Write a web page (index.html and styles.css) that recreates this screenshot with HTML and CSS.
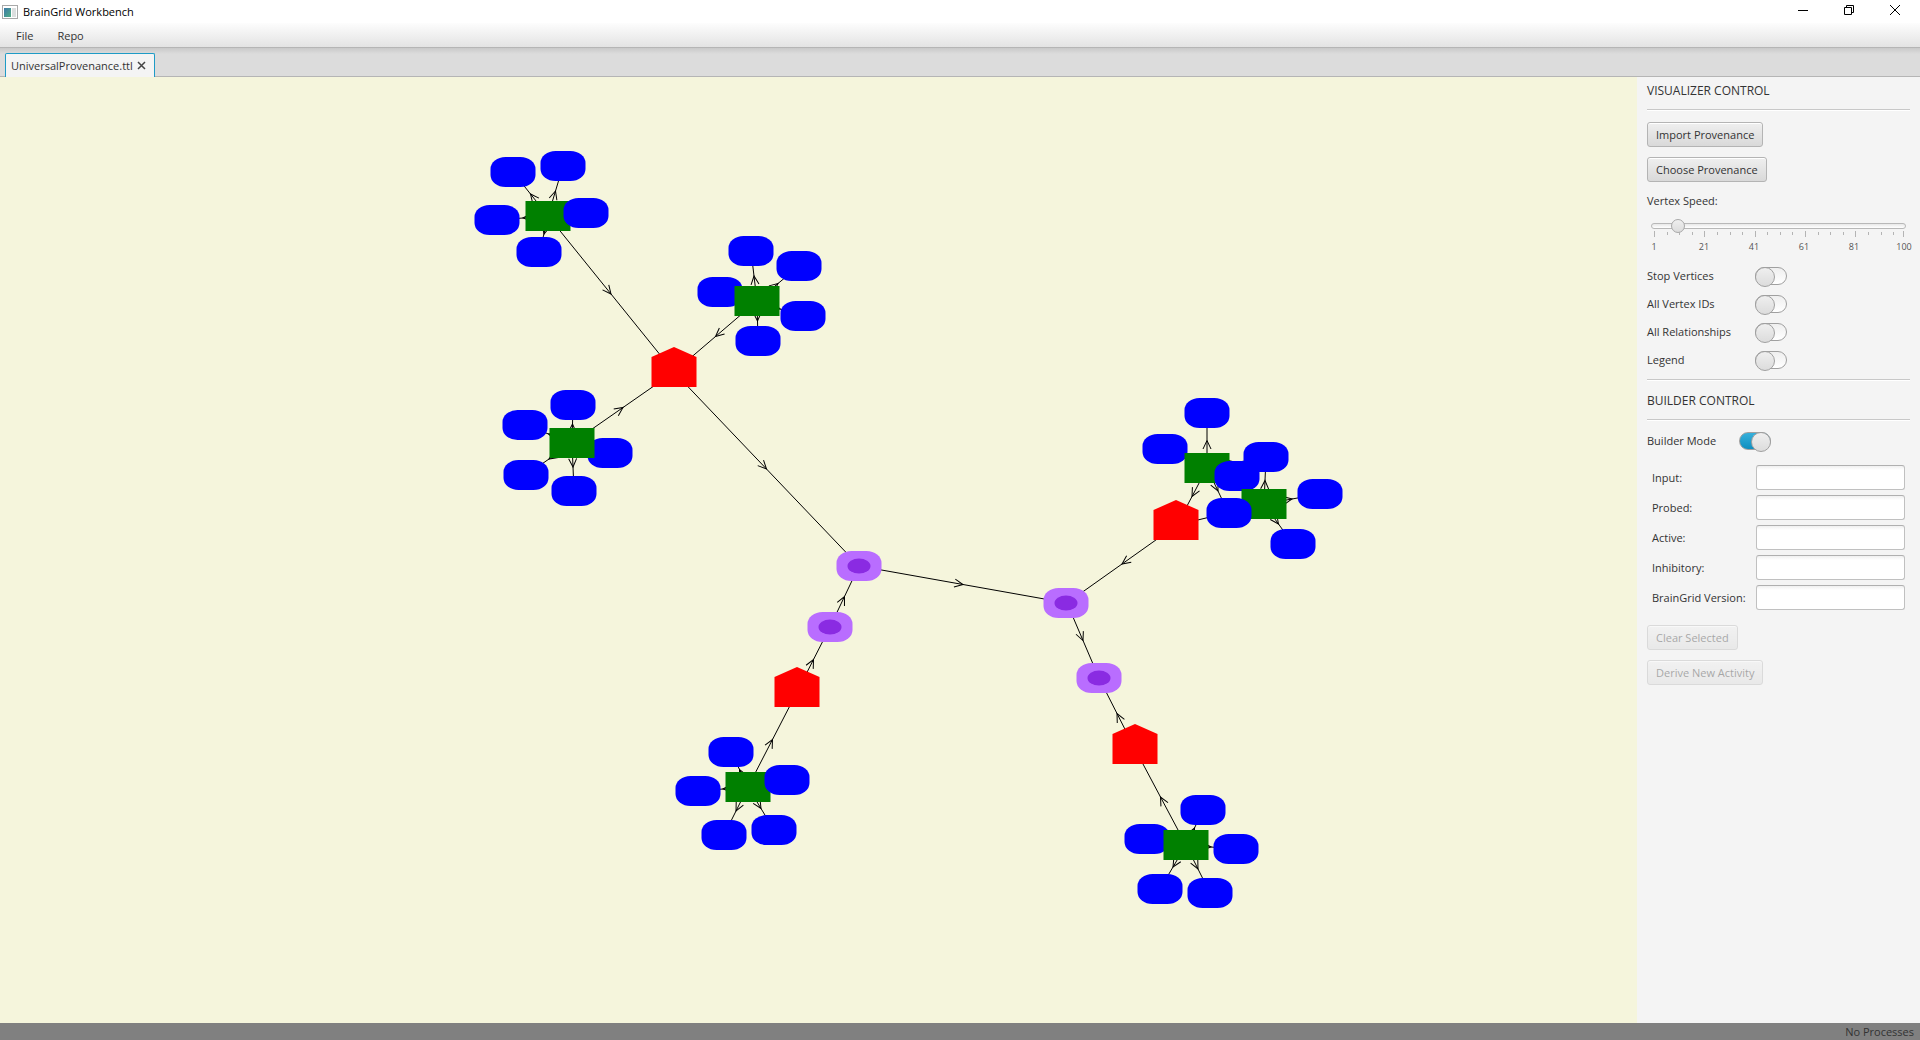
FILE: index.html
```html
<!DOCTYPE html>
<html lang="en">
<head>
<meta charset="utf-8">
<title>BrainGrid Workbench</title>
<link rel="stylesheet" href="styles.css">
</head>
<body>
<div class="window">
  <header class="titlebar">
    <svg class="app-icon" width="16" height="14" viewBox="0 0 16 14" aria-hidden="true">
      <defs><linearGradient id="pane" x1="0" y1="0" x2="1" y2="1"><stop offset="0" stop-color="#3d78a8"/><stop offset="1" stop-color="#4fae84"/></linearGradient></defs>
      <rect x="0.5" y="0.5" width="15" height="13" fill="#fff" stroke="#a9a9a9"/>
      <rect x="2" y="3" width="7" height="9" fill="url(#pane)"/>
      <rect x="10" y="3" width="4" height="9" fill="#dcdfdf"/>
    </svg>
    <h1 class="app-title">BrainGrid Workbench</h1>
    <div class="window-buttons">
      <button type="button" aria-label="Minimize"><svg width="12" height="12" viewBox="0 0 12 12"><path d="M1 6.5h10" stroke="#000" fill="none"/></svg></button>
      <button type="button" aria-label="Restore"><svg width="12" height="12" viewBox="0 0 12 12"><path d="M1.5 3.5h7v7h-7zM3.5 3.5v-2h7v7h-2" stroke="#000" fill="none"/></svg></button>
      <button type="button" aria-label="Close"><svg width="12" height="12" viewBox="0 0 12 12"><path d="M1 1l10 10M11 1l-10 10" stroke="#000" fill="none"/></svg></button>
    </div>
  </header>
  <nav class="menubar">
    <button type="button">File</button>
    <button type="button">Repo</button>
  </nav>
  <div class="tabs">
    <div class="tab">
      <span>UniversalProvenance.ttl</span>
      <button type="button" aria-label="Close tab"><svg width="9" height="9" viewBox="0 0 9 9"><path d="M1 1l7 7M8 1l-7 7" stroke="#444" stroke-width="1.5" fill="none"/></svg></button>
    </div>
  </div>
  <main class="content">
    <svg class="graph" role="img" aria-label="Provenance graph">
      <defs>
        <marker id="arrow" markerUnits="userSpaceOnUse" markerWidth="12" markerHeight="12" refX="10" refY="6" orient="auto"><path d="M1.5 2L10 6L1.5 10" fill="none" stroke="#000"/></marker>
        <rect id="entity" x="-22.5" y="-15" width="45" height="30" rx="15" ry="12" fill="#00f"/>
        <rect id="activity" x="-22.5" y="-15" width="45" height="30" fill="#008000"/>
        <path id="agent" d="M-22.5 15V-15L0 -25L22.5 -15V15Z" fill="#f00"/>
        <g id="commit"><rect x="-22.5" y="-15" width="45" height="30" rx="15" ry="12" fill="#b96dff"/><ellipse rx="11.5" ry="7.5" fill="#8a2be2"/></g>
      </defs>
      <g class="edges">
        <path d="M548 139L530.5 117L513 95"/>
        <path d="M548 139L555.5 114L563 89"/>
        <path d="M548 139L523 141L497 143"/>
        <path d="M548 139L567 137L586 136"/>
        <path d="M548 139L544 157L539 175"/>
        <path d="M548 139L611 217L674 295"/>
        <path d="M757 224L754 199L751 174"/>
        <path d="M757 224L778 206.5L799 189"/>
        <path d="M757 224L738 220L720 215"/>
        <path d="M757 224L780 232L803 239"/>
        <path d="M757 224L757.5 244L758 264"/>
        <path d="M757 224L715.5 259.5L674 295"/>
        <path d="M572 366L572.5 347L573 328"/>
        <path d="M572 366L548.5 357L525 348"/>
        <path d="M572 366L549 382L526 398"/>
        <path d="M572 366L573 390L574 414"/>
        <path d="M572 366L591 371L610 376"/>
        <path d="M572 366L623 330.5L674 295"/>
        <path d="M674 295L766.5 392L859 489"/>
        <path d="M859 489L963 507.5L1067 526"/>
        <path d="M830 550L844.5 519.5L859 489"/>
        <path d="M797 615L813.5 582.5L830 550"/>
        <path d="M748 710L772.5 662.5L797 615"/>
        <path d="M748 710L739.5 692.5L731 675"/>
        <path d="M748 710L723 712L698 714"/>
        <path d="M748 710L768 706.5L787 703"/>
        <path d="M748 710L736 734L724 758"/>
        <path d="M748 710L761 731.5L774 753"/>
        <path d="M1207 391L1207 363.5L1207 336"/>
        <path d="M1207 391L1186 382L1165 373"/>
        <path d="M1207 391L1222 395L1237 399"/>
        <path d="M1207 391L1236.5 385.5L1266 380"/>
        <path d="M1207 391L1218 414L1229 437"/>
        <path d="M1207 391L1192 419.5L1177 448"/>
        <path d="M1264 427L1265 403.5L1266 380"/>
        <path d="M1264 427L1292 422L1320 417"/>
        <path d="M1264 427L1278.5 447L1293 467"/>
        <path d="M1264 427L1220.5 437.5L1177 448"/>
        <path d="M1177 448L1122 487L1067 526"/>
        <path d="M1067 526L1083 563.5L1099 601"/>
        <path d="M1135 672L1117 636.5L1099 601"/>
        <path d="M1186 768L1160.5 720L1135 672"/>
        <path d="M1186 768L1194.5 751L1203 733"/>
        <path d="M1186 768L1166 765L1147 762"/>
        <path d="M1186 768L1211 770L1236 772"/>
        <path d="M1186 768L1173 790L1160 812"/>
        <path d="M1186 768L1198 792L1210 816"/>
      </g>
      <use href="#entity" x="720" y="215"/>
      <use href="#entity" x="610" y="376"/>
      <use href="#entity" x="1147" y="762"/>
      <use href="#entity" x="1165" y="372"/>
      <use href="#activity" x="548" y="139"/>
      <use href="#activity" x="757" y="224"/>
      <use href="#activity" x="572" y="366"/>
      <use href="#activity" x="748" y="710"/>
      <use href="#activity" x="1207" y="391"/>
      <use href="#entity" x="1237" y="399"/>
      <use href="#activity" x="1264" y="427"/>
      <use href="#activity" x="1186" y="768"/>
      <use href="#entity" x="513" y="95"/>
      <use href="#entity" x="563" y="89"/>
      <use href="#entity" x="497" y="143"/>
      <use href="#entity" x="586" y="136"/>
      <use href="#entity" x="539" y="175"/>
      <use href="#entity" x="751" y="174"/>
      <use href="#entity" x="799" y="189"/>
      <use href="#entity" x="803" y="239"/>
      <use href="#entity" x="758" y="264"/>
      <use href="#entity" x="573" y="328"/>
      <use href="#entity" x="525" y="348"/>
      <use href="#entity" x="526" y="398"/>
      <use href="#entity" x="574" y="414"/>
      <use href="#entity" x="731" y="675"/>
      <use href="#entity" x="698" y="714"/>
      <use href="#entity" x="787" y="703"/>
      <use href="#entity" x="724" y="758"/>
      <use href="#entity" x="774" y="753"/>
      <use href="#entity" x="1207" y="336"/>
      <use href="#entity" x="1266" y="380"/>
      <use href="#entity" x="1320" y="417"/>
      <use href="#entity" x="1229" y="436"/>
      <use href="#entity" x="1293" y="467"/>
      <use href="#entity" x="1203" y="733"/>
      <use href="#entity" x="1236" y="772"/>
      <use href="#entity" x="1160" y="812"/>
      <use href="#entity" x="1210" y="816"/>
      <use href="#agent" x="674" y="295"/>
      <use href="#agent" x="797" y="615"/>
      <use href="#agent" x="1176" y="448"/>
      <use href="#agent" x="1135" y="672"/>
      <use href="#commit" x="859" y="489"/>
      <use href="#commit" x="830" y="550"/>
      <use href="#commit" x="1066" y="526"/>
      <use href="#commit" x="1099" y="601"/>
    </svg>
    <aside class="sidebar">
      <h2>VISUALIZER CONTROL</h2>
      <hr>
      <div class="actions">
        <button type="button" class="btn">Import Provenance</button>
        <button type="button" class="btn">Choose Provenance</button>
      </div>
      <label class="speed-label" for="speed">Vertex Speed:</label>
      <div class="slider">
        <input type="range" id="speed" min="1" max="100" value="9">
        <svg class="ticks" width="250" height="6" aria-hidden="true">
          <path d="M.5 0v6M50.5 0v6M101.5 0v6M151.5 0v6M201.5 0v6M249.5 0v6" stroke="#b4b4b4"/>
          <path d="M13.5 1v3M25.5 1v3M38.5 1v3M63.5 1v3M76.5 1v3M88.5 1v3M113.5 1v3M126.5 1v3M138.5 1v3M164.5 1v3M176.5 1v3M189.5 1v3M214.5 1v3M227.5 1v3M239.5 1v3" stroke="#b4b4b4"/>
        </svg>
        <div class="scale"><span>1</span><span>21</span><span>41</span><span>61</span><span>81</span><span>100</span></div>
      </div>
      <div class="switches">
        <div class="switch-row"><label for="stop">Stop Vertices</label><input type="checkbox" class="switch" id="stop"></div>
        <div class="switch-row"><label for="ids">All Vertex IDs</label><input type="checkbox" class="switch" id="ids"></div>
        <div class="switch-row"><label for="rels">All Relationships</label><input type="checkbox" class="switch" id="rels"></div>
        <div class="switch-row"><label for="legend">Legend</label><input type="checkbox" class="switch" id="legend"></div>
      </div>
      <hr>
      <h2 class="builder-title">BUILDER CONTROL</h2>
      <hr>
      <div class="switch-row builder"><label for="mode">Builder Mode</label><input type="checkbox" class="switch" id="mode" checked></div>
      <div class="fields">
        <label for="input">Input:</label><input type="text" id="input">
        <label for="probed">Probed:</label><input type="text" id="probed">
        <label for="active">Active:</label><input type="text" id="active">
        <label for="inhibitory">Inhibitory:</label><input type="text" id="inhibitory">
        <label for="version">BrainGrid Version:</label><input type="text" id="version">
      </div>
      <div class="actions">
        <button type="button" class="btn" disabled>Clear Selected</button>
        <button type="button" class="btn" disabled>Derive New Activity</button>
      </div>
    </aside>
  </main>
  <footer class="statusbar">No Processes</footer>
</div>
</body>
</html>
```

FILE: styles.css
```css
* { box-sizing: border-box; }
body {
  margin: 0;
  font: 11px/16px "Open Sans", "Noto Sans", sans-serif;
  color: #333;
}
button, input { font: inherit; color: inherit; margin: 0; }
h1, h2 { margin: 0; font-weight: 400; }
h1 { font-size: 11px; }
h2 { font-size: 12px; }

.window { display: flex; flex-direction: column; min-height: 100vh; }

.titlebar { display: flex; align-items: center; height: 23px; padding: 0 2px; background: #fff; }
.app-icon { flex: none; }
.app-title { flex: 1; margin-left: 5px; color: #000; }
.window-buttons { display: flex; align-self: flex-start; }
.window-buttons button {
  display: flex; align-items: center; justify-content: center;
  width: 46px; height: 20px; padding: 0; border: 0; background: none;
}

.menubar {
  display: flex; height: 25px; padding: 2px 8px 0;
  background: linear-gradient(#fdfdfd, #e3e3e3);
  border-bottom: 1px solid #b5b5b5;
}
.menubar button { padding: 0 8px; border: 0; background: none; margin-right: 8px; }

.tabs {
  display: flex; align-items: flex-end; height: 29px; padding: 0 5px;
  background: linear-gradient(#c9c9c9, #dcdcdc 6px);
  border-bottom: 1px solid #b5b5b5;
}
.tab {
  display: flex; align-items: center; gap: 4px; height: 24px; padding: 0 8px 0 5px; margin-bottom: -1px;
  background: #f4f4f4; border: 1px solid #1e9bc6; border-bottom: 0; border-radius: 2px 2px 0 0;
}
.tab button { display: flex; padding: 0; border: 0; background: none; }

.content { display: flex; flex: 1; }
.graph { flex: 1; min-width: 0; min-height: 840px; background: #f5f5dc; }
.edges { fill: none; stroke: #000; marker-mid: url(#arrow); }

.sidebar { flex: none; width: 283px; padding: 6px 10px; background: #f4f4f4; }
hr { height: 2px; margin: 0; border: 0; background: #c8c8c8; border-bottom: 1px solid #fff; }
.sidebar h2 { margin-bottom: 10px; }
.sidebar .builder-title { margin-top: 12px; }

.actions { display: flex; flex-direction: column; align-items: flex-start; gap: 10px; margin-top: 11px; }
.btn {
  height: 25px; padding: 0 8px; border: 1px solid #b4b4b4; border-radius: 3px;
  background: linear-gradient(#efefef, #d9d9d9); box-shadow: inset 0 1px #fff;
}
.btn:disabled { opacity: .4; }

.speed-label { display: block; margin-top: 11px; }
.slider { padding: 12px 0 0 4px; }
.slider input { display: block; appearance: none; width: 255px; height: 10px; background: none; }
.slider input::-webkit-slider-runnable-track {
  height: 6px; border: 1px solid #b8b8b8; border-radius: 3px; background: linear-gradient(#e8e8e8, #fff);
}
.slider input::-webkit-slider-thumb {
  appearance: none; width: 14px; height: 14px; margin-top: -5px; border: 1px solid #a8a8a8; border-radius: 50%;
  background: linear-gradient(#efefef, #dcdcdc);
}
.ticks { display: block; margin-left: 3px; }
.scale { display: flex; margin: 5px 0 0 -22px; font-size: 9px; line-height: 10px; color: #555; }
.scale span { flex: none; width: 50px; text-align: center; }

.switches { display: flex; flex-direction: column; gap: 10px; margin: 15px 0 10px; }
.switch-row { display: flex; align-items: center; height: 18px; }
.switch-row label { width: 108px; }
.switch-row.builder label { width: 92px; }
.switch {
  appearance: none; display: flex; width: 32px; height: 18px; border: 1px solid #a0a0a0; border-radius: 9px;
  background: linear-gradient(#efefef, #fff);
}
.switch::before {
  content: ""; width: 18px; height: 18px; margin: -1px; border: 1px solid #a0a0a0; border-radius: 50%;
  background: linear-gradient(#efefef, #dcdcdc);
}
.switch:checked { justify-content: flex-end; background: linear-gradient(#36b0db, #0f8fc0); }
.builder { margin-top: 11px; }

.fields {
  display: grid; grid-template-columns: 104px 149px; align-items: center; gap: 5px 0;
  margin: 15px 0 0 5px;
}
.fields input {
  width: 149px; height: 25px; padding: 0 7px; border: 1px solid #c0c0c0; border-top-color: #b0b0b0; border-radius: 3px;
  background: linear-gradient(#f0f0f0, #fff 4px);
}
.fields + .actions { margin-top: 15px; }

.statusbar { height: 17px; padding: 0 6px; background: #808080; text-align: right; line-height: 17px; }
```
